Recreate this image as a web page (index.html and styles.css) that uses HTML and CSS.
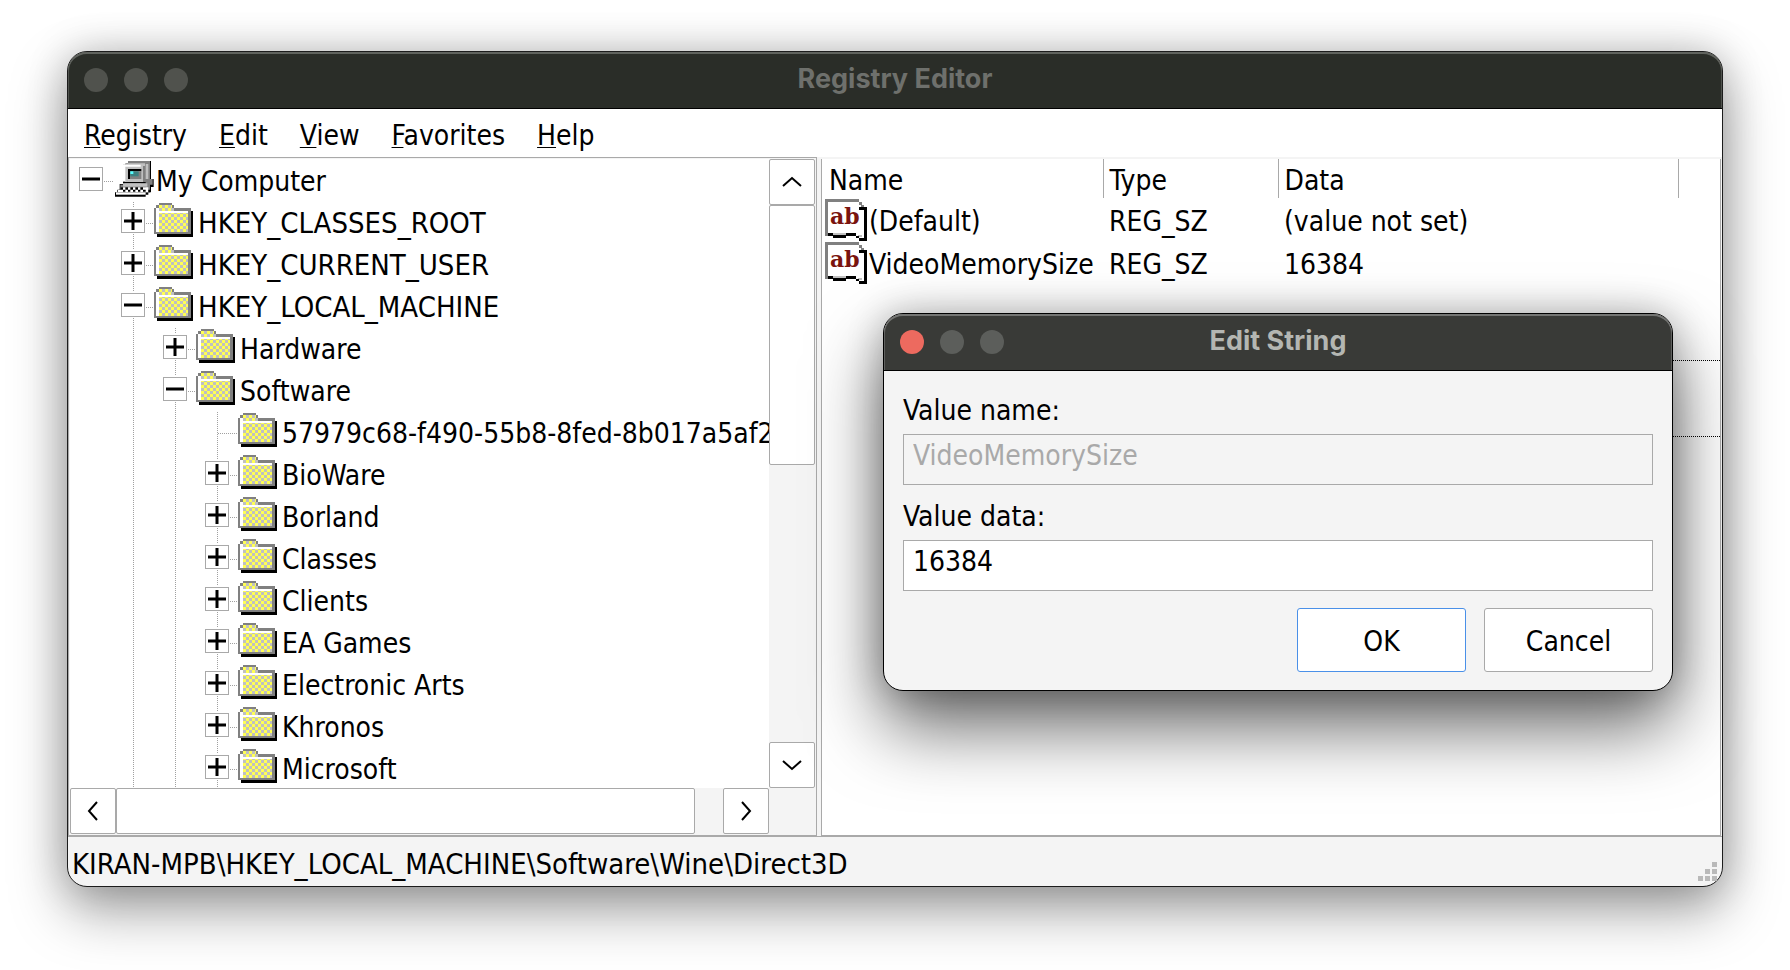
FILE: index.html
```html
<!DOCTYPE html>
<html lang="en">
<head>
<meta charset="utf-8">
<title>Registry Editor</title>
<link rel="stylesheet" href="styles.css">
</head>
<body>
<svg class="defs" aria-hidden="true">
  <defs>
    <pattern id="checker" width="6" height="6" patternUnits="userSpaceOnUse" x="5" y="2">
      <rect width="6" height="6" fill="#c0c0c0"/>
      <rect width="3" height="3" fill="#ffff54"/>
      <rect x="3" y="3" width="3" height="3" fill="#ffff54"/>
    </pattern>
    <symbol id="folder" viewBox="0 0 39 34">
      <path fill="#000" d="M3 8H39V34H3Z"/>
      <path fill="#808080" d="M0 5H2V2H5V0H18V2H20V5H37V31H0Z"/>
      <path fill="#fff" d="M2 5H5V8H34V10H5V29H2Z"/>
      <path fill="url(#checker)" d="M5 2H18V5H20V8H5ZM5 10H34V29H5Z"/>
    </symbol>
    <symbol id="computer" viewBox="0 0 126 126">
      <path fill="#000" d="M101 9H111V63H119V87H111V103H103V110H95V116H3V103H10V95H17V78H101Z"/>
      <path fill="#808080" d="M42 9H108V63H116V80H108V103H95V78H27V20H34V16H42Z"/>
      <path fill="#c0c0c0" d="M42 16H93V24H87V72H80V80H33V24H34V18H42Z"/>
      <path fill="#fff" d="M27 20H80V26H34V70H27Z"/>
      <path fill="#c0c0c0" d="M95 18H103V63H95Z"/>
      <path fill="#000" d="M42 33H82V40H49V63H42Z"/>
      <path fill="#808080" d="M49 40H82V63H49Z"/>
      <path fill="#3c8080" d="M49 40H74V55H49Z"/>
      <path fill="#5ff" d="M49 40H58V48H49Z"/>
      <path fill="#000" d="M27 72H95V76H27Z"/>
      <path fill="#808080" d="M19 80H103V88H19Z"/>
      <path fill="#c0c0c0" d="M27 76H100V86H27Z"/>
      <path fill="#fff" d="M19 88H103V103H12V96H19Z"/>
      <path fill="#000" d="M19 88H27V95H19ZM34 88H42V95H34ZM49 88H57V95H49ZM64 88H72V95H64ZM79 88H87V95H79ZM27 95H34V101H27ZM42 95H49V101H42ZM57 95H64V101H57ZM72 95H79V101H72ZM87 95H95V101H87ZM103 95H108V103H103Z"/>
      <path fill="#fff" d="M6 103H95V110H6Z"/>
    </symbol>
    <symbol id="string" viewBox="0 0 42 42">
      <path fill="#fff" d="M3 3H34V8H37V38H31V36H21V38H8V36H3Z"/>
      <path fill="#808080" d="M0 0H34V3H3V37H0ZM34 3H37V6H39V8H36V6H34Z"/>
      <path fill="#c0c0c0" d="M8 34H21V37H8ZM33 36H37V38H33Z"/>
      <path fill="#000" d="M34 8H42V42H34V39H31V37H21V39H8V37H3V34H8V36H21V34H31V37H34V39H39V11H34Z"/>
      <text class="string-glyph" x="5" y="25">ab</text>
    </symbol>
    <symbol id="plus" viewBox="0 0 22 22"><path fill="none" stroke="#000" stroke-width="3" d="M2 11H20M11 2V20"/></symbol>
    <symbol id="minus" viewBox="0 0 22 22"><path fill="none" stroke="#000" stroke-width="3" d="M2 11H20"/></symbol>
    <symbol id="chevron" viewBox="0 0 24 24"><path fill="none" stroke="#000" stroke-width="2" d="M3 16L12 8L21 16"/></symbol>
  </defs>
</svg>

<main class="window">
  <header class="titlebar">
    <div class="lights"><button aria-label="Close window"></button><button aria-label="Minimize window"></button><button aria-label="Zoom window"></button></div>
    <h1 class="title">Registry Editor</h1>
  </header>

  <nav class="menu">
    <button><u>R</u>egistry</button><button><u>E</u>dit</button><button><u>V</u>iew</button><button><u>F</u>avorites</button><button><u>H</u>elp</button>
  </nav>

  <div class="panes">
    <section class="tree-pane" aria-label="Keys">
      <div class="tree-view">
        <ul class="tree">
          <li><div class="row"><button class="toggle" aria-label="Collapse"><svg><use href="#minus"/></svg></button><svg class="icon computer"><use href="#computer"/></svg><span>My Computer</span></div>
            <ul class="branch">
              <li><div class="row hive"><button class="toggle" aria-label="Expand"><svg><use href="#plus"/></svg></button><svg class="icon"><use href="#folder"/></svg><span>HKEY_CLASSES_ROOT</span></div></li>
              <li><div class="row hive"><button class="toggle" aria-label="Expand"><svg><use href="#plus"/></svg></button><svg class="icon"><use href="#folder"/></svg><span>HKEY_CURRENT_USER</span></div></li>
              <li><div class="row hive"><button class="toggle" aria-label="Collapse"><svg><use href="#minus"/></svg></button><svg class="icon"><use href="#folder"/></svg><span>HKEY_LOCAL_MACHINE</span></div>
                <ul class="branch">
                  <li><div class="row"><button class="toggle" aria-label="Expand"><svg><use href="#plus"/></svg></button><svg class="icon"><use href="#folder"/></svg><span>Hardware</span></div></li>
                  <li><div class="row"><button class="toggle" aria-label="Collapse"><svg><use href="#minus"/></svg></button><svg class="icon"><use href="#folder"/></svg><span>Software</span></div>
                    <ul class="branch">
                      <li><div class="row leaf"><svg class="icon"><use href="#folder"/></svg><span>57979c68-f490-55b8-8fed-8b017a5af2</span></div></li>
                      <li><div class="row"><button class="toggle" aria-label="Expand"><svg><use href="#plus"/></svg></button><svg class="icon"><use href="#folder"/></svg><span>BioWare</span></div></li>
                      <li><div class="row"><button class="toggle" aria-label="Expand"><svg><use href="#plus"/></svg></button><svg class="icon"><use href="#folder"/></svg><span>Borland</span></div></li>
                      <li><div class="row"><button class="toggle" aria-label="Expand"><svg><use href="#plus"/></svg></button><svg class="icon"><use href="#folder"/></svg><span>Classes</span></div></li>
                      <li><div class="row"><button class="toggle" aria-label="Expand"><svg><use href="#plus"/></svg></button><svg class="icon"><use href="#folder"/></svg><span>Clients</span></div></li>
                      <li><div class="row"><button class="toggle" aria-label="Expand"><svg><use href="#plus"/></svg></button><svg class="icon"><use href="#folder"/></svg><span>EA Games</span></div></li>
                      <li><div class="row"><button class="toggle" aria-label="Expand"><svg><use href="#plus"/></svg></button><svg class="icon"><use href="#folder"/></svg><span>Electronic Arts</span></div></li>
                      <li><div class="row"><button class="toggle" aria-label="Expand"><svg><use href="#plus"/></svg></button><svg class="icon"><use href="#folder"/></svg><span>Khronos</span></div></li>
                      <li><div class="row"><button class="toggle" aria-label="Expand"><svg><use href="#plus"/></svg></button><svg class="icon"><use href="#folder"/></svg><span>Microsoft</span></div></li>
                    </ul>
                  </li>
                </ul>
              </li>
            </ul>
          </li>
        </ul>
      </div>
      <div class="scroll vertical">
        <button class="arrow" aria-label="Scroll up"><svg><use href="#chevron"/></svg></button>
        <div class="track"><div class="thumb"></div></div>
        <button class="arrow down" aria-label="Scroll down"><svg><use href="#chevron"/></svg></button>
      </div>
      <div class="scroll horizontal">
        <button class="arrow left" aria-label="Scroll left"><svg><use href="#chevron"/></svg></button>
        <div class="track"><div class="thumb"></div></div>
        <button class="arrow right" aria-label="Scroll right"><svg><use href="#chevron"/></svg></button>
      </div>
    </section>

    <section class="list-pane" aria-label="Values">
      <table class="values">
        <colgroup><col class="col-name"><col class="col-type"><col class="col-data"><col></colgroup>
        <thead><tr><th scope="col">Name</th><th scope="col">Type</th><th scope="col">Data</th><td></td></tr></thead>
        <tbody>
          <tr><td><div class="value"><svg><use href="#string"/></svg><span>(Default)</span></div></td><td>REG_SZ</td><td>(value not set)</td><td></td></tr>
          <tr><td><div class="value"><svg><use href="#string"/></svg><span>VideoMemorySize</span></div></td><td>REG_SZ</td><td>16384</td><td></td></tr>
        </tbody>
      </table>
      <div class="focus-band"></div>
    </section>
  </div>

  <footer class="status">
    <span>KIRAN-MPB\HKEY_LOCAL_MACHINE\Software\Wine\Direct3D</span>
    <svg class="grip" viewBox="0 0 19 19"><path fill="#b9b9b9" d="M14 0H19V5H14ZM7 7H12V12H7ZM14 7H19V12H14ZM0 14H5V19H0ZM7 14H12V19H7ZM14 14H19V19H14Z"/></svg>
  </footer>

  <form class="dialog" role="dialog" aria-labelledby="dialog-title">
    <header class="titlebar">
      <div class="lights"><button type="button" class="close" aria-label="Close dialog"></button><button type="button" aria-label="Minimize dialog"></button><button type="button" aria-label="Zoom dialog"></button></div>
      <h2 class="title" id="dialog-title">Edit String</h2>
    </header>
    <div class="dialog-body">
      <label for="value-name">Value name:</label>
      <input id="value-name" type="text" value="VideoMemorySize" disabled>
      <label for="value-data">Value data:</label>
      <input id="value-data" type="text" value="16384">
      <div class="actions"><button type="button" class="default">OK</button><button type="button">Cancel</button></div>
    </div>
  </form>
</main>
</body>
</html>
```
FILE: styles.css
```css
* { box-sizing: border-box; }

body {
  margin: 0;
  padding: 51px 67px;
  min-height: 100vh;
  background: #fff;
  color: #000;
  font: 28px/34px "DejaVu Sans Condensed", "DejaVu Sans", sans-serif;
}

button, input { font: inherit; color: inherit; margin: 0; padding: 0; }
ul { list-style: none; margin: 0; padding: 0; }
svg { display: block; }
.defs { position: absolute; width: 0; height: 0; }

.window {
  position: relative;
  border: 1px solid #1c1c1c;
  border-radius: 20px;
  background: #f4f4f4;
  box-shadow: 0 24px 56px rgba(0, 0, 0, .36), 0 0 40px rgba(0, 0, 0, .2);
}

/* Title bars */
.titlebar {
  display: grid;
  grid-template-columns: 1fr auto 1fr;
  align-items: center;
  height: 57px;
  padding: 0 16px;
  border-bottom: 1px solid #000;
  border-radius: 19px 19px 0 0;
  background: #2a2d28;
  box-shadow: inset 0 2px 0 #60635e, inset 1px 0 0 #50534e, inset -1px 0 0 #50534e;
}
.lights { display: flex; gap: 16px; }
.lights button {
  width: 24px;
  height: 24px;
  border: 0;
  border-radius: 50%;
  background: #50524d;
}
.title {
  margin: 0;
  padding-bottom: 2px;
  color: #6e706c;
  font: 700 27px/32px Inter, sans-serif;
}

/* Menu bar */
.menu {
  display: flex;
  gap: 32px;
  height: 48px;
  padding: 6px 16px 0;
  background: #fff;
}
.menu button { border: 0; background: none; }
.menu u { text-decoration-thickness: 1px; text-underline-offset: 2px; }

.panes {
  display: grid;
  grid-template-columns: minmax(0, 749fr) minmax(0, 905fr);
}

/* Key tree */
.tree-pane {
  display: grid;
  grid-template: 629px 46px / minmax(0, 1fr) 46px;
  padding: 1px;
  border: 1px solid #a9a9a9;
  background: #f4f4f4;
}
.tree-view { overflow: hidden; background: #fff; }
.tree { padding: 1px 0 0 9px; }
.branch {
  padding-left: 42px;
  background: repeating-linear-gradient(#a0a0a0 0 1px, #fff 1px 2px) 54px 0 / 1px 100% no-repeat;
}
.row { display: flex; align-items: center; height: 42px; white-space: nowrap; }
.row::before { content: ""; order: 1; flex: none; width: 10px; height: 1px; background: repeating-linear-gradient(90deg, #fff 0 1px, #a0a0a0 1px 2px); }
.row > .icon { order: 2; flex: none; width: 39px; height: 34px; margin: 0 5px 6px -1px; }
.row > .computer { width: 42px; height: 42px; margin: 0 0 4px 1px; }
.row > span { order: 3; padding-top: 2px; }
.row.leaf::before { width: 22px; margin-left: 12px; }
.hive { font-size: 29px; }
.row.hive > span { padding-top: 0; }
.toggle {
  flex: none;
  width: 24px;
  height: 24px;
  border: 1px solid #a9a9a9;
  background: #fff;
  margin-bottom: 4px;
  box-shadow: 0 0 0 1px #fff;
}
.toggle svg { width: 22px; height: 22px; }

/* Scroll bars */
.scroll { display: flex; }
.vertical { flex-direction: column; }
.track { flex: 1; display: flex; }
.vertical .track { flex-direction: column; }
.arrow, .thumb { border: 1px solid #a9a9a9; border-radius: 2px; background: #fff; }
.arrow { display: grid; place-items: center; flex: none; width: 46px; height: 46px; }
.arrow svg { width: 24px; height: 24px; }
.down svg { transform: rotate(180deg); }
.left svg { transform: rotate(-90deg); }
.right svg { transform: rotate(90deg); }
.vertical .thumb { height: calc(100% - 277px); }
.horizontal .thumb { width: calc(100% - 28px); }

/* Value list */
.list-pane {
  margin: 2px 1px 0 4px;
  border: 1px solid #a9a9a9;
  border-top: 0;
  background: #fff;
}
.values { width: 100%; border-collapse: collapse; table-layout: fixed; }
.col-name { width: 281px; }
.col-type { width: 175px; }
.col-data { width: 400px; }
.values th, .values td { padding: 4px 0 0 6px; text-align: left; font-weight: 400; white-space: nowrap; }
.values thead { height: 39px; }
.values th { border-right: 1px solid #a9a9a9; }
.values th:first-child { padding-left: 7px; }
.values tbody td { height: 43px; }
.values tbody td:first-child { padding: 0 0 0 3px; }
.value { display: flex; align-items: center; gap: 2px; }
.value svg { flex: none; width: 42px; height: 42px; }
.value span { padding-top: 4px; }
.string-glyph { fill: #7a140e; font: 700 22px "DejaVu Serif", serif; }
.focus-band {
  height: 77px;
  margin: 76px 0 0 50%;
  border: 1px dotted #000;
  border-width: 1px 0;
}

/* Status bar */
.status {
  display: flex;
  justify-content: space-between;
  align-items: center;
  height: 50px;
  padding: 0 5px 0 4px;
  border-top: 1px solid #a9a9a9;
  border-radius: 0 0 19px 19px;
  font-size: 29px;
}
.status span { padding-top: 4px; }
.grip { width: 19px; height: 19px; margin-top: 20px; }

/* Dialog */
.dialog {
  position: absolute;
  top: 261px;
  right: 49px;
  left: 815px;
  border: 1px solid #000;
  border-radius: 20px;
  background: #f4f4f4;
  box-shadow: 0 36px 72px rgba(0, 0, 0, .6), 0 0 36px rgba(0, 0, 0, .24);
}
.dialog .titlebar { background: #393a37; box-shadow: inset 0 2px 0 #747573, inset 1px 0 0 #60615f, inset -1px 0 0 #60615f; }
.dialog .lights button { background: #5c5e5b; }
.dialog .lights .close { background: #ed6a5f; }
.dialog .title { color: #b4b6b2; }
.dialog-body { display: flex; flex-direction: column; padding: 23px 19px 18px; }
.dialog label { margin-bottom: 6px; }
.dialog input {
  height: 51px;
  margin-bottom: 15px;
  padding: 0 9px 8px;
  border: 1px solid #a9a9a9;
  background: #fff;
}
.dialog input:disabled { background: #f4f4f4; color: #a9a9a9; }
.actions { display: flex; justify-content: flex-end; gap: 18px; margin-top: 2px; }
.actions button {
  width: 169px;
  height: 64px;
  padding-top: 3px;
  border: 1px solid #a9a9a9;
  border-radius: 3px;
  background: #fff;
}
.actions .default { border-color: #4a90e8; }
```
